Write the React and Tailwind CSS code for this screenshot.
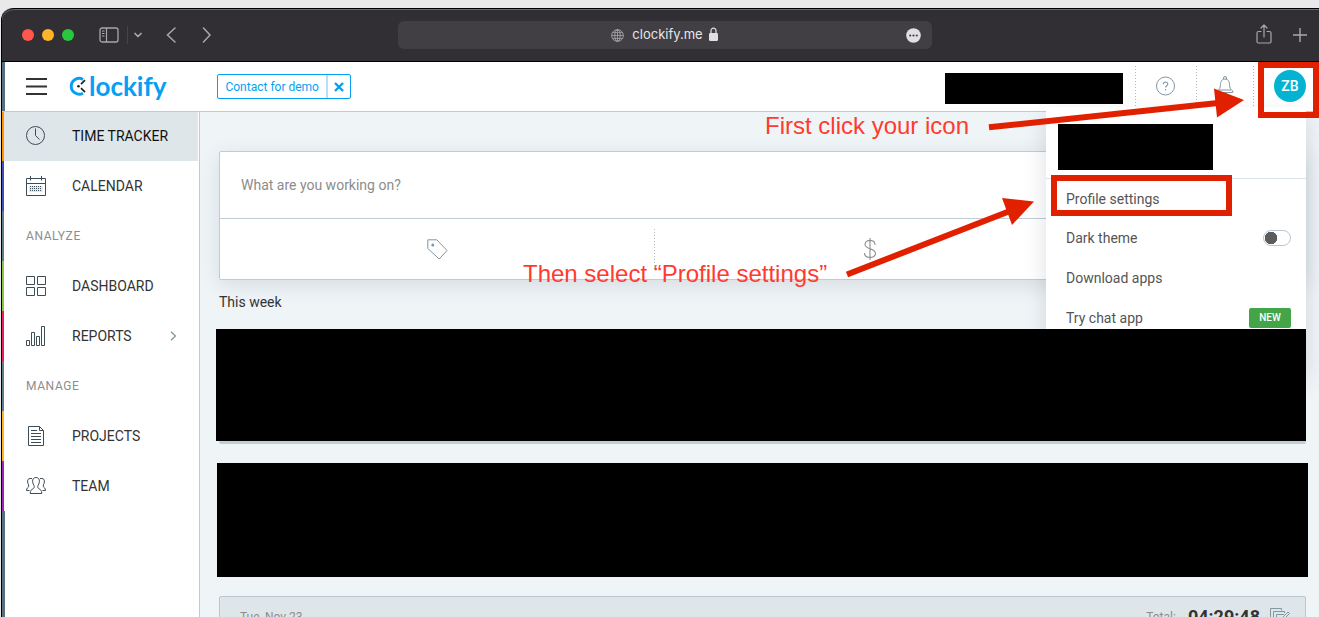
import React from "react";

const NAV = [
  { label: "TIME TRACKER", icon: "clock", stripe: "bg-[#ff9800]", active: true },
  { label: "CALENDAR", icon: "calendar", stripe: "bg-[#3f51b5]" },
  { heading: "ANALYZE" },
  { label: "DASHBOARD", icon: "grid", stripe: "bg-[#8bc34a]" },
  { label: "REPORTS", icon: "bars", stripe: "bg-[#e91e63]", more: true },
  { heading: "MANAGE" },
  { label: "PROJECTS", icon: "doc", stripe: "bg-[#fbb52d]" },
  { label: "TEAM", icon: "team", stripe: "bg-[#9c27b0]" },
];

const DOTS =
  "w-px shrink-0 bg-[repeating-linear-gradient(to_bottom,#aebcc5_0px,#aebcc5_1px,transparent_1px,transparent_3px)]";

function NavIcon({ name }) {
  const shapes = {
    clock: (
      <>
        <circle cx="9.5" cy="9.5" r="9" />
        <path d="M9.5 2.5v7l4 4" />
      </>
    ),
    calendar: (
      <>
        <path d="M.5 2.500h19v17H.5zM.5 7.500h19M4.500 0v4.500M15.500 0v4.500" />
        <path d="M4 10.500h12M4 12.500h12M4 14.500h12" strokeDasharray="1 1" />
        <path d="M4 10v6M6 10v6M8 10v6M10 10v6M12 10v6M14 10v6M16 10v6" strokeWidth=".5" opacity=".5" />
      </>
    ),
    grid: <path d="M.5.5h8v8h-8zM11.500.5h8v8h-8zM.5 11.500h8v8h-8zM11.500 11.500h8v8h-8z" />,
    bars: <path d="M.5 14.500h3v5h-3zM5.500 6.500h3v13h-3zM10.500 10.500h3v9h-3zM15.500.5h3v19h-3z" />,
    doc: (
      <path d="M2.500.5h11l4 4v15h-15zM13.500.5v4h4M5 4.500h6M5 7.500h10M5 10.500h10M5 13.500h10M5 16.500h10" />
    ),
    team: (
      <>
        <path d="M10 1.500c2.600 0 3.600 1.800 3.400 4.300-.1 1.700-.9 2.700-1.400 3.700-.5 1.300-.3 2.500.8 3.200 1.600.9 3 1.600 3 4.800H4.200c0-3.200 1.400-3.900 3-4.800 1.100-.7 1.300-1.900.8-3.200-.5-1-1.300-2-1.400-3.700C6.400 3.300 7.400 1.500 10 1.500z" />
        <path d="M6 2.600C3 1.800 1.300 3.200 1.600 6c.1 1.300.7 1.900 1 2.900.4 1.700-.3 2.500-1.100 3-.7.500-1 1.400-1 2.600h3" />
        <path d="M14 2.600c3-.8 4.700.6 4.400 3.400-.1 1.300-.7 1.900-1 2.900-.4 1.700.3 2.500 1.100 3 .7.500 1 1.400 1 2.600h-3" />
      </>
    ),
  };
  return (
    <svg width="20" height="20" viewBox="0 0 20 20" fill="none" stroke="#3d4d57" aria-hidden="true" className="shrink-0 overflow-visible">
      {shapes[name]}
    </svg>
  );
}

function TitleBar() {
  return (
    <div className="flex h-[54px] shrink-0 items-center rounded-tl-xl border-y border-black bg-[#322f34] px-3 shadow-[inset_0_1px_0_#6d6b6f]">
      <div className="flex flex-1 items-center pl-2 text-[#a9a7ab]">
        <span className="flex gap-2">
          <span className="size-3 rounded-full bg-[#ff5650]" />
          <span className="size-3 rounded-full bg-[#ffb429]" />
          <span className="size-3 rounded-full bg-[#28c73d]" />
        </span>
        <button type="button" aria-label="Show sidebar" className="ml-[25px]">
          <svg width="20" height="16" viewBox="0 0 20 16" fill="none" stroke="currentColor">
            <rect x="1" y="1" width="18" height="14" rx="2" strokeWidth="1.300" />
            <path d="M7.500 1v14" strokeWidth="1.200" />
            <path d="M3 4h2.500M3 6.500h2.500M3 9h2.500" />
          </svg>
        </button>
        <span className="ml-2 h-[18px] w-px bg-[#454347]" />
        <button type="button" aria-label="Tab groups" className="ml-1.5">
          <svg width="8" height="6" viewBox="0 0 8 6" fill="none" stroke="currentColor" strokeWidth="1.700" strokeLinecap="round" strokeLinejoin="round">
            <path d="M1 1.500l3 3 3-3" />
          </svg>
        </button>
        <button type="button" aria-label="Back" className="ml-6">
          <svg width="10" height="16" viewBox="0 0 10 16" fill="none" stroke="currentColor" strokeWidth="1.500" strokeLinecap="round">
            <path d="M9 1L1.500 8 9 15" />
          </svg>
        </button>
        <button type="button" aria-label="Forward" className="ml-[26px]">
          <svg width="10" height="16" viewBox="0 0 10 16" fill="none" stroke="currentColor" strokeWidth="1.500" strokeLinecap="round">
            <path d="M1.500 1L8 8l-6.500 7" />
          </svg>
        </button>
      </div>
      <div className="relative flex h-7 w-[534px] items-center justify-center rounded-md bg-[#413f43] font-[Inter,sans-serif] text-[13px] text-[#e6e5e7]">
        <svg width="13" height="13" viewBox="0 0 13 13" fill="none" stroke="#a5a3a7" className="mr-2" aria-hidden="true">
          <circle cx="6.500" cy="6.500" r="5.800" />
          <ellipse cx="6.500" cy="6.500" rx="2.700" ry="5.800" />
          <path d="M6.500.7v11.600M.7 6.500h11.600M1.600 3.600h9.800M1.600 9.400h9.800" strokeWidth=".8" />
        </svg>
        <span>clockify.me</span>
        <svg width="9" height="14" viewBox="0 0 9 14" className="mb-0.5 ml-1.5" aria-hidden="true">
          <path d="M2 7V3.600a2.500 2.500 0 015 0V7" fill="none" stroke="#e0dfe1" strokeWidth="1.200" />
          <rect y="6" width="9" height="8" rx="1.200" fill="#e0dfe1" />
        </svg>
        <button type="button" aria-label="Page options" className="absolute right-[11px]">
          <svg width="15" height="15" viewBox="0 0 15 15">
            <circle cx="7.500" cy="7.500" r="7.300" fill="#e0dfe1" />
            <circle cx="4.200" cy="7.500" r="1.100" fill="#413f43" />
            <circle cx="7.500" cy="7.500" r="1.100" fill="#413f43" />
            <circle cx="10.800" cy="7.500" r="1.100" fill="#413f43" />
          </svg>
        </button>
      </div>
      <div className="flex flex-1 items-center justify-end gap-[21px] text-[#a9a7ab]">
        <button type="button" aria-label="Share" className="pb-0.5">
          <svg width="16" height="20" viewBox="0 0 16 20" fill="none" stroke="currentColor" strokeWidth="1.200" strokeLinecap="round" strokeLinejoin="round">
            <path d="M5 7.500H2.500A1.500 1.500 0 001 9v8.500A1.500 1.500 0 002.500 19h11a1.500 1.500 0 001.500-1.500V9a1.500 1.500 0 00-1.500-1.500H11M8 13V1M5 4l3-3 3 3" />
          </svg>
        </button>
        <button type="button" aria-label="New tab">
          <svg width="14" height="14" viewBox="0 0 14 14" fill="none" stroke="currentColor" strokeWidth="1.400">
            <path d="M7 0v14M0 7h14" />
          </svg>
        </button>
      </div>
    </div>
  );
}

function ProfileMenu() {
  const row = "relative flex h-10 w-full items-center justify-between pr-[15px] pl-5";
  return (
    <div className="absolute top-[45px] right-[13px] z-10 w-[260px] bg-white pb-8 text-sm text-[#555] shadow-[0_10px_20px_rgba(60,80,95,0.18)]">
      <div className="h-[72px] border-b border-[#d9e2e7] px-3 pt-[17px]">
        <div className="h-[46px] w-[155px] bg-black" />
      </div>
      <a href="#profile" className="relative flex h-[39px] w-full items-center pl-5">
        Profile settings
        <span className="absolute -top-1 left-[5px] h-[41px] w-[181px] border-6 border-[#e12000]" />
      </a>
      <label className={row}>
        Dark theme
        <input
          type="checkbox"
          className="h-4 w-7 appearance-none rounded-full border border-[#b9c8d0] bg-[radial-gradient(circle_at_7px_7px,#5c5c5c_6px,transparent_6.500px)]"
        />
      </label>
      <a href="#apps" className={row}>Download apps</a>
      <a href="#chat" className={row}>
        Try chat app
        <span className="flex h-5 w-[42px] items-center justify-center rounded-xs bg-[#43a547] text-[10px] font-medium text-white">
          NEW
        </span>
      </a>
    </div>
  );
}

function Header() {
  return (
    <header className="relative flex h-[50px] shrink-0 items-center border-b border-[#c0ccd4] bg-white">
      <span className="w-[3px] self-stretch bg-[#56707d]" />
      <button type="button" aria-label="Toggle menu" className="ml-[21px]">
        <svg width="21" height="17" viewBox="0 0 21 17" stroke="#333" strokeWidth="2">
          <path d="M0 1h21M0 8.500h21M0 16h21" />
        </svg>
      </button>
      <a href="#home" aria-label="Clockify" className="ml-[22px] flex items-center pb-0.5 font-[Lato,sans-serif] text-[26px] leading-8 font-bold text-[#069ff3]">
        <svg width="20" height="20" viewBox="0 0 20 20" fill="none" aria-hidden="true">
          <path d="M14 3.400A7.900 7.900 0 1014 17.200" stroke="#069ff3" strokeWidth="2.900" />
          <path d="M12 8.200l4-4M12 12.200l4 4" stroke="#222" strokeWidth="1.700" />
          <circle cx="9.500" cy="10.200" r="1.300" fill="#222" />
        </svg>
        <span>lockify</span>
      </a>
      <div className="ml-[51px] flex h-[25px] items-stretch rounded-xs border border-[#069ff3] text-xs text-[#069ff3]">
        <a href="#demo" className="flex items-center border-r-2 border-[#b4e0fb] px-[7px]">Contact for demo</a>
        <button type="button" aria-label="Dismiss" className="px-1.5">
          <svg width="10" height="10" viewBox="0 0 10 10" stroke="currentColor" strokeWidth="2.400">
            <path d="M1 1l8 8M9 1l-8 8" />
          </svg>
        </button>
      </div>
      <div className="mb-px ml-auto flex h-10 items-center">
        <div className="mt-[5px] mr-3 h-[31px] w-[178px] bg-black" />
        <span className={`${DOTS} h-full`} />
        <button type="button" aria-label="Help" className="flex w-[60px] justify-center">
          <svg width="20" height="20" viewBox="0 0 20 20" fill="none" stroke="#8097a4">
            <circle cx="9.500" cy="10" r="9" />
            <path d="M7.300 8.200c0-3 4.600-2.800 4.500 0 0 1.600-2.200 1.600-2.200 3.300M9.600 13v1.300" strokeWidth="1.100" />
          </svg>
        </button>
        <span className={`${DOTS} h-full`} />
        <button type="button" aria-label="Notifications" className="flex w-14 justify-center">
          <svg width="18" height="20" viewBox="0 0 18 20" fill="none" stroke="#8097a4">
            <path d="M7.500 3V2a1.500 1.500 0 013 0v1M9 3c3.500 0 4.300 2.800 4.500 5.500.2 3.700 1 5.200 3.300 6.400v1.600H1.200v-1.600c2.300-1.200 3.100-2.700 3.300-6.400C4.700 5.800 5.500 3 9 3zM6.500 16.500c.5 2 4.500 2 5 0M3 14h12" />
          </svg>
        </button>
        <span className={`${DOTS} h-full`} />
        <button type="button" className="relative z-20 mr-[13px] ml-5 flex size-8 items-center justify-center rounded-full bg-[#03b3d1] text-sm font-medium text-white">
          ZB
          <span className="absolute -top-2 -left-4 h-14 w-[61px] border-6 border-[#e12000]" />
        </button>
      </div>
      <ProfileMenu />
    </header>
  );
}

function Sidebar() {
  return (
    <nav className="-mt-px flex w-[198px] shrink-0 flex-col border-r border-[#c0ccd4] bg-white">
      {NAV.map((item) =>
        item.heading ? (
          <div key={item.heading} className="flex h-[50px] items-stretch">
            <span className="w-0.5 bg-[#607d8b]" />
            <h2 className="self-center pl-[22px] text-xs tracking-wider text-[#8d8d8d]">{item.heading}</h2>
          </div>
        ) : (
          <a
            key={item.label}
            href="#nav"
            className={item.active ? "mr-px flex h-[50px] items-center bg-[#dee6e9]" : "flex h-[50px] items-center"}
          >
            <span className={`w-0.5 self-stretch ${item.stripe}`} />
            <span className="pl-[22px]"><NavIcon name={item.icon} /></span>
            <span className={item.active ? "pl-[26px] text-sm text-[#111]" : "pl-[26px] text-sm text-[#333]"}>{item.label}</span>
            {item.more && (
              <svg width="7" height="10" viewBox="0 0 7 10" fill="none" stroke="#8097a4" strokeWidth="1.300" className="mr-[22px] ml-auto" aria-hidden="true">
                <path d="M1 .7L5.500 5 1 9.300" />
              </svg>
            )}
          </a>
        )
      )}
      <span className="w-[3px] flex-1 bg-[#56707d]" />
    </nav>
  );
}

function Tracker() {
  return (
    <section className="rounded-xs border border-[#c0ccd4] bg-white shadow-[0_5px_20px_rgba(60,80,95,0.14)]">
      <input
        type="text"
        aria-label="Description"
        placeholder="What are you working on?"
        className="block h-[66px] w-full px-[21px] text-sm outline-none placeholder:text-[#8c8c8c]"
      />
      <div className="flex h-[61px] items-center border-t border-[#c0ccd4]">
        <button type="button" aria-label="Tags" className="flex w-2/5 justify-center">
          <svg width="21" height="21" viewBox="0 0 21 21" fill="none" stroke="#8097a4">
            <path d="M.8.8h9L20 11.500 12.200 20 .8 9.500z" />
            <circle cx="5.800" cy="6" r="1.500" fill="#8097a4" stroke="none" />
          </svg>
        </button>
        <span className={`${DOTS} h-10`} />
        <button type="button" aria-label="Billable" className="flex w-2/5 justify-center pr-1">
          <svg width="14" height="22" viewBox="0 0 14 22" fill="none" stroke="#8c8f91" strokeWidth="1.100">
            <path d="M7 0v22M12 7C12 .9 2 .9 2 6.500c0 5 10.500 3.600 10.500 9 0 5.300-11 5.300-11-.5" />
          </svg>
        </button>
      </div>
    </section>
  );
}

function Notes() {
  return (
    <div className="pointer-events-none absolute top-0 right-0 z-30 h-[310px] w-[800px] font-['Liberation_Sans',Arial,sans-serif] text-2xl leading-7 whitespace-nowrap text-[#ff3b30]">
      <p className="absolute top-28 left-[246px]">First click your icon</p>
      <p className="absolute top-[260px] left-1">Then select “Profile settings”</p>
      <svg width="800" height="310" viewBox="519 0 800 310" fill="#e12000" className="absolute inset-0" aria-hidden="true">
        <path d="M989 127.300L1218 103" stroke="#e12000" strokeWidth="6" />
        <path d="M1214 88.500L1244 100l-27 17.500z" />
        <path d="M847 274.500L1010 211" stroke="#e12000" strokeWidth="6" />
        <path d="M1002 198l32 3.500-22 23.500z" />
      </svg>
    </div>
  );
}

export default function App() {
  return (
    <div className="relative h-screen overflow-hidden bg-[#e9e9e9] pt-2 pl-px font-[Roboto,sans-serif]">
      <div className="flex h-full flex-col rounded-tl-xl border-l border-black">
        <TitleBar />
        <Header />
        <div className="flex min-h-0 flex-1 bg-[#eff4f7]">
          <Sidebar />
          <main className="min-w-0 flex-1 overflow-hidden pt-[39px] pr-[13px] pl-[19px]">
            <Tracker />
            <h2 className="mb-[5px] flex h-11 items-center text-sm text-[#333]">This week</h2>
            <div className="relative z-20 flex flex-col gap-[19px]">
              <div className="rounded-b-xs bg-[#c2ced5] pb-[3px]">
                <div className="-ml-[3px] h-28 bg-black" />
              </div>
              <div className="-mx-0.5 h-[114px] bg-black" />
              <section className="flex h-[42px] items-center rounded-t-xs border border-[#b7c8d1] bg-[#dee6e9] pr-[15px] pl-5">
                <span className="text-xs text-[#8d8d8d]">Tue, Nov 23</span>
                <span className="ml-auto text-xs text-[#8d8d8d]">Total:</span>
                <span className="ml-3 text-lg leading-6 font-bold text-[#333]">04:29:48</span>
                <button type="button" aria-label="Bulk edit" className="ml-2.5">
                  <svg width="20" height="20" viewBox="0 0 20 20" fill="none" stroke="#8097a4">
                    <path d="M3 13.500H.5v-12h11v2M6 16.500H3.500v-12h11v1.500M14 7.500H6.500v12h11V11M10 15l1-3 7-7 1.500 1.500-7 7z" />
                  </svg>
                </button>
              </section>
            </div>
          </main>
        </div>
      </div>
      <Notes />
    </div>
  );
}
